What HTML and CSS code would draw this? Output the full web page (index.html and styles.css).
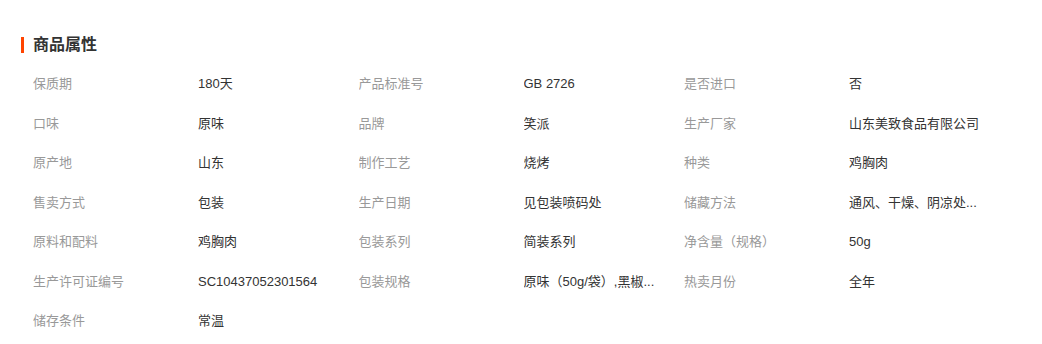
FILE: index.html
```html
<!DOCTYPE html>
<html lang="zh-CN">
<head>
<meta charset="utf-8">
<link rel="stylesheet" href="styles.css">
</head>
<body>
<section class="attrs">
  <h2 class="attrs-title">商品属性</h2>
  <div class="attrs-grid">
    <div class="k">保质期</div><div class="v">180天</div>
    <div class="k">产品标准号</div><div class="v">GB 2726</div>
    <div class="k">是否进口</div><div class="v">否</div>

    <div class="k">口味</div><div class="v">原味</div>
    <div class="k">品牌</div><div class="v">笑派</div>
    <div class="k">生产厂家</div><div class="v">山东美致食品有限公司</div>

    <div class="k">原产地</div><div class="v">山东</div>
    <div class="k">制作工艺</div><div class="v">烧烤</div>
    <div class="k">种类</div><div class="v">鸡胸肉</div>

    <div class="k">售卖方式</div><div class="v">包装</div>
    <div class="k">生产日期</div><div class="v">见包装喷码处</div>
    <div class="k">储藏方法</div><div class="v">通风、干燥、阴凉处...</div>

    <div class="k">原料和配料</div><div class="v">鸡胸肉</div>
    <div class="k">包装系列</div><div class="v">简装系列</div>
    <div class="k">净含量（规格）</div><div class="v">50g</div>

    <div class="k">生产许可证编号</div><div class="v">SC10437052301564</div>
    <div class="k">包装规格</div><div class="v">原味（50g/袋）,黑椒...</div>
    <div class="k">热卖月份</div><div class="v">全年</div>

    <div class="k">储存条件</div><div class="v">常温</div>
  </div>
</section>
</body>
</html>
```

FILE: styles.css
```css
html, body {
  margin: 0;
  padding: 0;
  background: #fff;
}
body {
  font-family: "Liberation Sans", "Noto Sans CJK SC", sans-serif;
  font-size: 13px;
  color: #333;
}
.attrs {
  padding: 37px 0 0 21px;
  width: 1000px;
}
.attrs-title {
  margin: 0;
  font-size: 16px;
  font-weight: bold;
  line-height: 16px;
  color: #333;
  border-left: 3px solid #ff4400;
  padding-left: 9px;
  height: 16px;
}
.attrs-grid {
  display: grid;
  grid-template-columns: 165px 160.5px 165px 160.5px 165px 160.5px;
  grid-auto-rows: 39.5px;
  padding: 22px 0 0 12px;
}
.k, .v {
  line-height: 17px;
  white-space: nowrap;
  overflow: hidden;
}
.k {
  color: #999;
}
.v {
  color: #333;
}
.num {
  letter-spacing: -0.3px;
}
```
